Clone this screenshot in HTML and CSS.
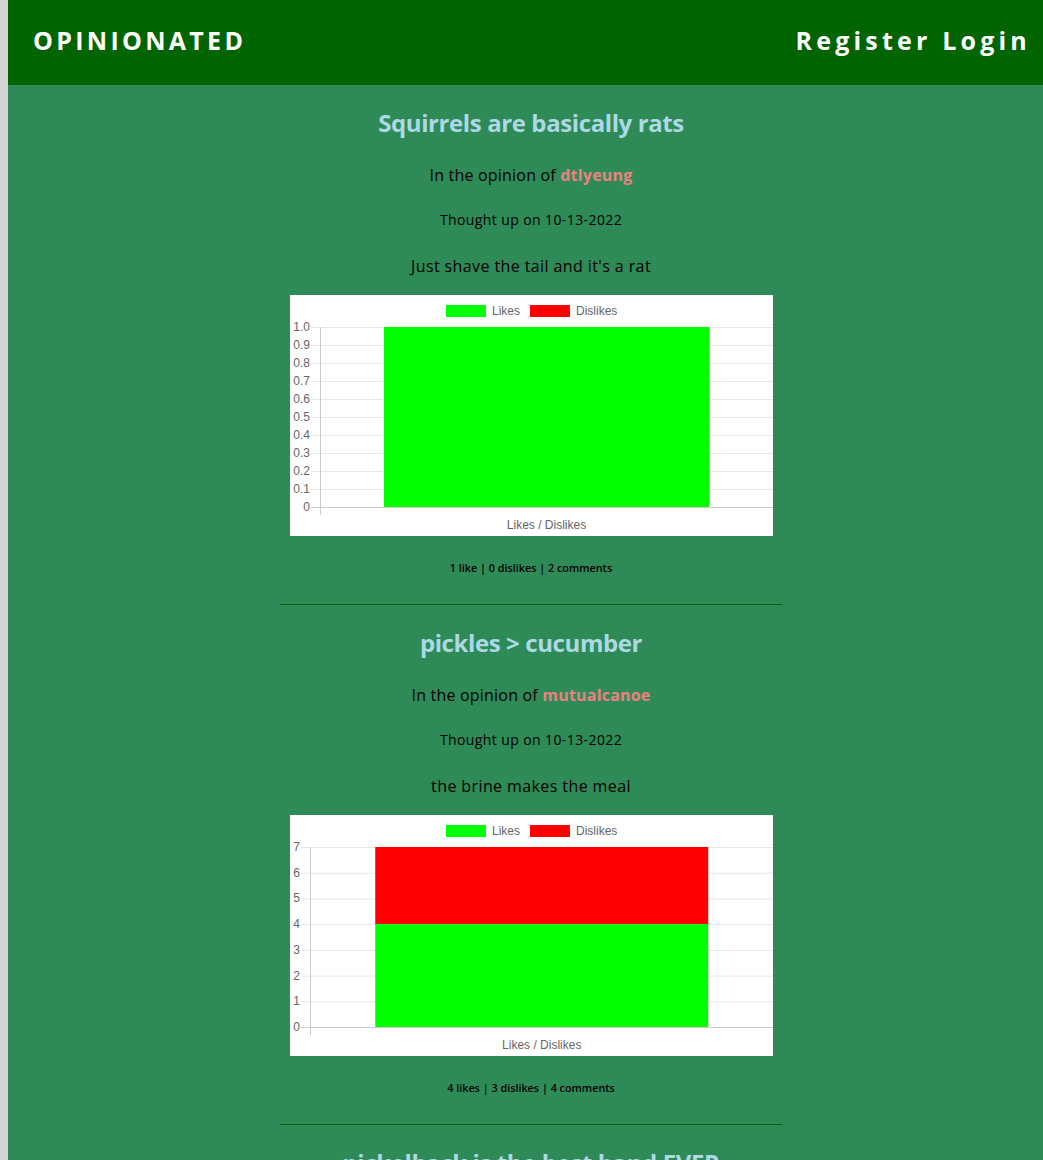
FILE: index.html
```
<!DOCTYPE html>
<html>
<head>
<meta charset="utf-8">
<title>Opinionated</title>
<link rel="stylesheet" href="styles.css">
</head>
<body>
<div class="page">
  <header class="topbar">
    <div class="brand">OPINIONATED</div>
    <nav class="nav"><a href="#">Register</a> <a href="#">Login</a></nav>
  </header>
  <main class="feed">
    <article class="post">
      <h2 class="post-title">Squirrels are basically rats</h2>
      <h3 class="post-author">In the opinion of <span class="user">dtlyeung</span></h3>
      <h4 class="post-date">Thought up on 10-13-2022</h4>
      <p class="post-body">Just shave the tail and it's a rat</p>
      <div class="chart">
        <svg width="483" height="241" viewBox="0 0 483 241">
          <rect class="legend-like" x="156" y="10" width="40" height="12"/>
          <text class="legend-text" x="202" y="20">Likes</text>
          <rect class="legend-dislike" x="240" y="10" width="40" height="12"/>
          <text class="legend-text" x="286" y="20">Dislikes</text>
          <line class="grid" x1="21" y1="32.5" x2="483" y2="32.5"/>
          <line class="grid" x1="21" y1="50.5" x2="483" y2="50.5"/>
          <line class="grid" x1="21" y1="68.5" x2="483" y2="68.5"/>
          <line class="grid" x1="21" y1="86.5" x2="483" y2="86.5"/>
          <line class="grid" x1="21" y1="104.5" x2="483" y2="104.5"/>
          <line class="grid" x1="21" y1="122.5" x2="483" y2="122.5"/>
          <line class="grid" x1="21" y1="140.5" x2="483" y2="140.5"/>
          <line class="grid" x1="21" y1="158.5" x2="483" y2="158.5"/>
          <line class="grid" x1="21" y1="176.5" x2="483" y2="176.5"/>
          <line class="grid" x1="21" y1="194.5" x2="483" y2="194.5"/>
          <line class="axis" x1="21" y1="212.5" x2="483" y2="212.5"/>
          <line class="axis" x1="30.5" y1="32" x2="30.5" y2="220"/>
          <rect class="bar-like" x="94" y="32" width="325.5" height="180"/>
          <text class="tick" x="20" y="36">1.0</text>
          <text class="tick" x="20" y="54">0.9</text>
          <text class="tick" x="20" y="72">0.8</text>
          <text class="tick" x="20" y="90">0.7</text>
          <text class="tick" x="20" y="108">0.6</text>
          <text class="tick" x="20" y="126">0.5</text>
          <text class="tick" x="20" y="144">0.4</text>
          <text class="tick" x="20" y="162">0.3</text>
          <text class="tick" x="20" y="180">0.2</text>
          <text class="tick" x="20" y="198">0.1</text>
          <text class="tick" x="20" y="216">0</text>
          <text class="xlabel" x="256.5" y="234">Likes / Dislikes</text>
        </svg>
      </div>
      <p class="post-stats">1 like | 0 dislikes | 2 comments</p>
    </article>
    <hr class="divider">
    <article class="post">
      <h2 class="post-title">pickles &gt; cucumber</h2>
      <h3 class="post-author">In the opinion of <span class="user">mutualcanoe</span></h3>
      <h4 class="post-date">Thought up on 10-13-2022</h4>
      <p class="post-body">the brine makes the meal</p>
      <div class="chart">
        <svg width="483" height="241" viewBox="0 0 483 241">
          <rect class="legend-like" x="156" y="10" width="40" height="12"/>
          <text class="legend-text" x="202" y="20">Likes</text>
          <rect class="legend-dislike" x="240" y="10" width="40" height="12"/>
          <text class="legend-text" x="286" y="20">Dislikes</text>
          <line class="grid" x1="11" y1="32.5" x2="483" y2="32.5"/>
          <line class="grid" x1="11" y1="58.2" x2="483" y2="58.2"/>
          <line class="grid" x1="11" y1="83.9" x2="483" y2="83.9"/>
          <line class="grid" x1="11" y1="109.6" x2="483" y2="109.6"/>
          <line class="grid" x1="11" y1="135.4" x2="483" y2="135.4"/>
          <line class="grid" x1="11" y1="161.1" x2="483" y2="161.1"/>
          <line class="grid" x1="11" y1="186.8" x2="483" y2="186.8"/>
          <line class="axis" x1="11" y1="212.5" x2="483" y2="212.5"/>
          <line class="axis" x1="20.5" y1="32" x2="20.5" y2="220"/>
          <rect class="bar-dislike" x="85.25" y="32" width="333" height="77.14"/>
          <rect class="bar-like" x="85.25" y="109.14" width="333" height="102.86"/>
          <text class="tick" x="10" y="36">7</text>
          <text class="tick" x="10" y="61.7">6</text>
          <text class="tick" x="10" y="87.4">5</text>
          <text class="tick" x="10" y="113.1">4</text>
          <text class="tick" x="10" y="138.9">3</text>
          <text class="tick" x="10" y="164.6">2</text>
          <text class="tick" x="10" y="190.3">1</text>
          <text class="tick" x="10" y="216">0</text>
          <text class="xlabel" x="251.75" y="234">Likes / Dislikes</text>
        </svg>
      </div>
      <p class="post-stats">4 likes | 3 dislikes | 4 comments</p>
    </article>
    <hr class="divider">
    <article class="post">
      <h2 class="post-title">pickelback is the best band EVER</h2>
      <h3 class="post-author">In the opinion of <span class="user">dtlyeung</span></h3>
      <h4 class="post-date">Thought up on 10-13-2022</h4>
    </article>
  </main>
</div>
</body>
</html>
```
FILE: styles.css
```
html, body {
  margin: 0;
  padding: 0;
}
body {
  background: #d3d3d3;
  padding-left: 8px;
  font-family: "Open Sans", "DejaVu Sans", sans-serif;
  color: #000;
}
.page {
  background: #2e8b57;
  min-height: 1160px;
}
.topbar {
  background: #006400;
  height: 85px;
  box-sizing: border-box;
  padding: 0 12px 5px 25px;
  display: flex;
  align-items: center;
  justify-content: space-between;
}
.brand {
  color: #fff;
  font-weight: 700;
  font-size: 25px;
  letter-spacing: 3.3px;
}
.nav {
  color: #fff;
  font-size: 25px;
  font-weight: 700;
  letter-spacing: 4.2px;
}
.nav a {
  color: #fff;
  text-decoration: none;
}
.feed {
  display: flex;
  flex-direction: column;
  align-items: center;
  padding-left: 11px;
}
.post {
  width: 502px;
  display: flex;
  flex-direction: column;
  align-items: center;
  padding: 23px 0 28px;
}
.post-title {
  margin: 0;
  font-size: 24px;
  line-height: 30px;
  font-weight: 700;
  color: #add8e6;
  letter-spacing: -0.4px;
}
.post-author {
  margin: 25px 0 0;
  font-size: 16px;
  line-height: 24px;
  font-weight: 400;
  letter-spacing: 0.2px;
}
.user {
  color: #f08080;
  font-weight: 700;
}
.post-date {
  margin: 23px 0 0;
  font-size: 14px;
  line-height: 20px;
  font-weight: 400;
  letter-spacing: 0.4px;
}
.post-body {
  margin: 24px 0 0;
  font-size: 16px;
  line-height: 24px;
  letter-spacing: 0.4px;
}
.chart {
  margin-top: 17px;
  width: 483px;
  height: 241px;
  background: #fff;
}
.chart svg {
  display: block;
}
.legend-like, .bar-like { fill: #00ff00; }
.legend-dislike, .bar-dislike { fill: #ff0000; }
.legend-text, .tick, .xlabel {
  font-family: "Liberation Sans", Arial, sans-serif;
  font-size: 12px;
  fill: #666;
}
.tick { text-anchor: end; }
.xlabel { text-anchor: middle; }
.grid { stroke: #e6e6e6; stroke-width: 1; }
.axis { stroke: #cccccc; stroke-width: 1; }
.post-stats {
  margin: 24px 0 0;
  font-size: 10.8px;
  line-height: 16px;
  font-weight: 600;
}
.divider {
  width: 502px;
  margin: 0;
  border: 0;
  border-top: 1px solid #006400;
  height: 0;
}
```
